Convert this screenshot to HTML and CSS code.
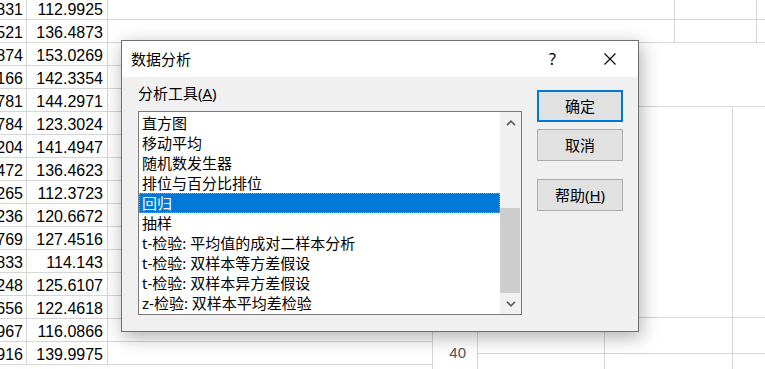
FILE: index.html
```html
<!DOCTYPE html>
<html lang="zh-CN">
<head>
  <meta charset="UTF-8" />
  <title>数据分析</title>
  <link rel="stylesheet" href="styles.css">
</head>
<body>

  <div class="sheet">
    <div class="cols-left" id="leftRows"></div>

    <div class="cols-right">
      <div class="row top-row"><div class="cell r1"></div><div class="cell r2"></div><div class="cell r3"></div></div>
      <div class="row top-row"><div class="cell r1"></div><div class="cell r2"></div><div class="cell r3"></div></div>

      <!-- pasted sheet picture -->
      <div class="pic">
        <div class="pic-band"></div>
        <div class="pc"></div><div class="pc"></div><div class="pc"></div><div class="pc"></div>
        <div class="pc head">40</div><div class="pc"></div><div class="pc"></div><div class="pc"></div>
        <div class="pc"></div><div class="pc"></div><div class="pc"></div>
      </div>
    </div>
  </div>

  <div class="dialog">
    <div class="titlebar">
      <span class="title">数据分析</span>
      <span class="tb-btn">?</span>
      <span class="tb-btn">
        <svg width="12" height="12" viewBox="0 0 12 12"><path d="M0.5 0.5L11.5 11.5M11.5 0.5L0.5 11.5" stroke="#000" stroke-width="1.1" fill="none"/></svg>
      </span>
    </div>

    <div class="dlg-body">
      <div class="left-pane">
        <div class="label">分析工具(<u>A</u>)</div>
        <div class="listbox">
          <div class="items" id="items"></div>
          <div class="scrollbar">
            <div class="arrow">
              <svg width="10" height="6" viewBox="0 0 10 6"><path d="M1 5.2L5 1.2L9 5.2" stroke="#606060" stroke-width="1.7" fill="none"/></svg>
            </div>
            <div class="track"><div class="thumb"></div></div>
            <div class="arrow">
              <svg width="10" height="6" viewBox="0 0 10 6"><path d="M1 0.8L5 4.8L9 0.8" stroke="#606060" stroke-width="1.7" fill="none"/></svg>
            </div>
          </div>
        </div>
      </div>

      <div class="buttons">
        <button class="btn default">确定</button>
        <button class="btn">取消</button>
        <button class="btn help">帮助(<u>H</u>)</button>
      </div>
    </div>
  </div>

  <script>
    const colA = ['831','521','874','166','781','784','204','472','265','236','769','833','248','656','967','916'];
    const colB = ['112.9925','136.4873','153.0269','142.3354','144.2971','123.3024','141.4947','136.4623',
                  '112.3723','120.6672','127.4516','114.143','125.6107','122.4618','116.0866','139.9975'];

    const leftRows = document.getElementById('leftRows');
    colA.forEach((a, i) => {
      const row = document.createElement('div');
      row.className = 'row';
      row.innerHTML = `<div class="cell a"><span>${a}</span></div><div class="cell b"><span>${colB[i]}</span></div><div class="cell c"></div>`;
      leftRows.appendChild(row);
    });

    const tools = ['直方图', '移动平均', '随机数发生器', '排位与百分比排位', '回归', '抽样',
                   't-检验: 平均值的成对二样本分析', 't-检验: 双样本等方差假设',
                   't-检验: 双样本异方差假设', 'z-检验: 双样本平均差检验'];

    const items = document.getElementById('items');
    tools.forEach(name => {
      const div = document.createElement('div');
      div.className = 'item' + (name === '回归' ? ' selected' : '');
      div.textContent = name;
      items.appendChild(div);
    });
  </script>
</body>
</html>
```

FILE: styles.css
```css
body {
  margin: 0;
  width: 765px;
  height: 369px;
  overflow: hidden;
  background: #fff;
  font-family: 'Liberation Sans', Arial, sans-serif;
}

/* spreadsheet behind the dialog */
.sheet {
  display: flex;
  margin-top: -3px;
  height: 372px;
  overflow: hidden;
}

.cols-left {
  width: 432px;
}

.cols-right {
  flex: 1;
  display: flex;
  flex-direction: column;
}

.row {
  display: flex;
  height: 23px;
  flex-shrink: 0;
  box-sizing: border-box;
  border-bottom: 1px solid #d6d6d6;
}

.cell {
  box-sizing: border-box;
  display: flex;
  justify-content: flex-end;
  align-items: flex-end;
  overflow: hidden;
  white-space: nowrap;
  font-size: 16px;
  line-height: 18px;
  color: #000;
}

.cell.a {
  width: 27px;
  border-right: 1px solid #d6d6d6;
  padding-right: 3px;
}

.cell.b {
  width: 81px;
  border-right: 1px solid #d6d6d6;
  padding-right: 4px;
}

.cell.c {
  flex: 1;
}

.top-row .r1 {
  width: 243px;
  border-right: 1px solid #d6d6d6;
}

.top-row .r2 {
  width: 82px;
  border-right: 1px solid #d6d6d6;
}

.top-row .r3 {
  flex: 1;
}

.pic {
  flex: 1;
  display: grid;
  grid-template-columns: 45px 127px 128px 1fr;
  grid-template-rows: 63px 211px 36px 1fr;
}

.pic-band {
  grid-column: 1 / -1;
}

.pc {
  box-sizing: border-box;
  border-top: 1px solid #d6d6d6;
  border-left: 1px solid #d6d6d6;
}

.pc.head {
  grid-row: span 2;
  text-align: right;
  padding: 26px 11px 0 0;
  font-size: 15px;
  line-height: 18px;
  color: #555;
}

/* dialog */
.dialog {
  position: absolute;
  left: 121px;
  top: 40px;
  width: 518px;
  height: 292px;
  box-sizing: border-box;
  border: 1px solid #6f6f6f;
  background: #f0f0f0;
  box-shadow: 2px 5px 18px rgba(0,0,0,0.32);
  display: flex;
  flex-direction: column;
  font-family: 'Noto Sans', 'Noto Sans CJK SC', sans-serif;
  font-size: 15px;
  color: #000;
}

.titlebar {
  height: 36px;
  background: #fff;
  display: flex;
  align-items: center;
  padding-left: 9px;
}

.title {
  flex: 1;
  line-height: 20px;
}

.tb-btn {
  width: 57px;
  height: 36px;
  display: flex;
  align-items: center;
  justify-content: center;
  font-size: 16px;
}

.dlg-body {
  flex: 1;
  display: flex;
  padding-left: 16px;
}

.left-pane {
  padding-top: 6px;
}

.label {
  line-height: 20px;
  margin-bottom: 8px;
}

.listbox {
  width: 384px;
  height: 204px;
  box-sizing: border-box;
  border: 1px solid #7a7a7a;
  background: #fff;
  display: flex;
}

.items {
  flex: 1;
  padding-top: 1px;
}

.item {
  height: 20px;
  line-height: 20px;
  padding-left: 3px;
  white-space: nowrap;
}

.item.selected {
  background: #0078d7;
  color: #fff;
  outline: 1px dotted #ff8728;
  outline-offset: -1px;
}

.scrollbar {
  width: 21px;
  background: #f0f0f0;
  display: flex;
  flex-direction: column;
}

.arrow {
  height: 21px;
  display: flex;
  align-items: center;
  justify-content: center;
}

.track {
  flex: 1;
  display: flex;
  flex-direction: column;
  justify-content: flex-end;
}

.thumb {
  height: 85px;
  width: 20px;
  background: #cdcdcd;
}

.buttons {
  display: flex;
  flex-direction: column;
  padding-top: 13px;
  margin-left: 15px;
}

.btn {
  width: 86px;
  height: 32px;
  box-sizing: border-box;
  border: 1px solid #adadad;
  background: #e1e1e1;
  font-family: 'Noto Sans', 'Noto Sans CJK SC', sans-serif;
  font-size: 15px;
  line-height: 20px;
  color: #000;
  padding: 0;
  margin-bottom: 7px;
}

.btn.default {
  border: 2px solid #0078d7;
}

.btn.help {
  margin-top: 11px;
}
```
